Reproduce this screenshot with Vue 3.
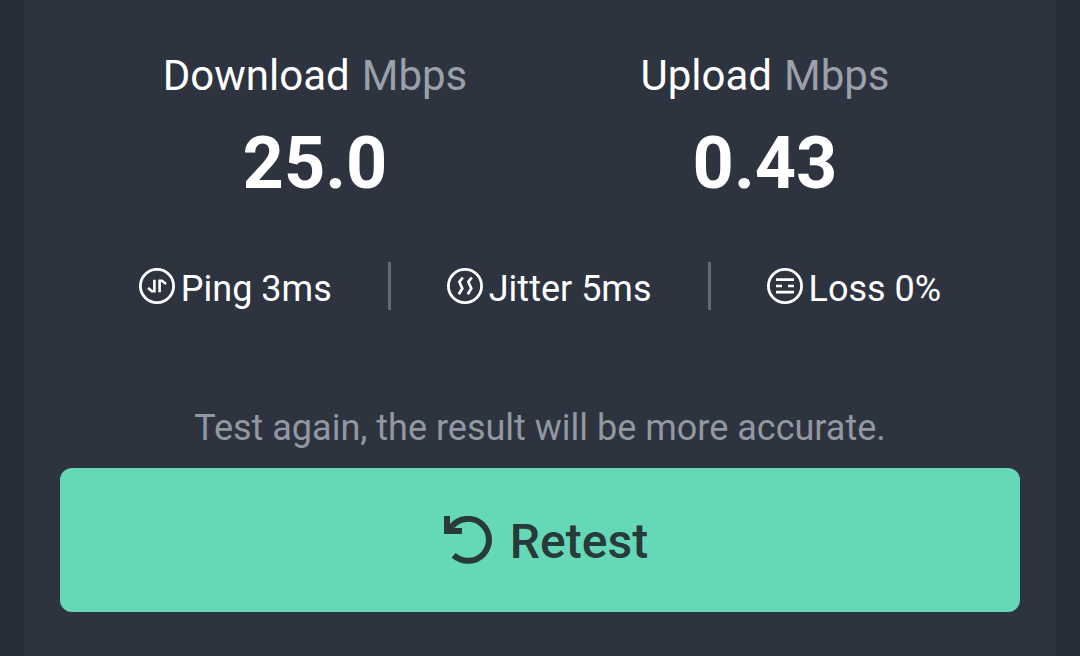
<script setup>
const speeds = [
  { label: 'Download', unit: 'Mbps', value: '25.0' },
  { label: 'Upload', unit: 'Mbps', value: '0.43' },
]
const stats = [
  { id: 'ping', text: 'Ping 3ms' },
  { id: 'jitter', text: 'Jitter 5ms' },
  { id: 'loss', text: 'Loss 0%' },
]
</script>

<template>
  <main class="card">
    <section class="speeds">
      <div v-for="s in speeds" :key="s.label" class="speed">
        <div class="speed-label"><span>{{ s.label }}</span><span class="unit">{{ s.unit }}</span></div>
        <div class="speed-value">{{ s.value }}</div>
      </div>
    </section>

    <section class="stats">
      <template v-for="(s, i) in stats" :key="s.id">
        <span v-if="i > 0" class="divider"></span>
        <div class="stat">
          <svg class="stat-icon" viewBox="0 0 36 36" fill="none" stroke="currentColor" aria-hidden="true">
            <circle cx="18" cy="18" r="16.6" stroke-width="2.8" />
            <path v-if="s.id === 'ping'" stroke-width="2.6" d="M15.4 11.7V23.2H13L9 20M20.6 24.3V12.8H23L27 16" />
            <g v-else-if="s.id === 'jitter'" stroke-width="2.7">
              <path d="M15.8 9.5L12.3 13.8L15.3 20.5L11.8 26.3" stroke-linejoin="round" />
              <path d="M24.8 9.5L21.3 13.8L24.3 20.5L20.8 26.3" stroke-linejoin="round" />
            </g>
            <path v-else stroke-width="2.7" d="M9 11.6H27M9 18H15M21 18H27M9 24.2H27" />
          </svg>
          <span>{{ s.text }}</span>
        </div>
      </template>
    </section>

    <p class="hint">Test again, the result will be more accurate.</p>
    <button class="retest" type="button">
      <svg class="retest-icon" viewBox="0 0 48 48" aria-hidden="true">
        <path d="M8 10.2A21 21 0 1 1 9.7 39.3" fill="none" stroke="currentColor" stroke-width="6" />
        <path d="M0 0H6V8L10 12H18V18H0Z" fill="currentColor" />
      </svg>
      <span class="retest-text">Retest</span>
    </button>
  </main>
</template>

<style>
body {
  margin: 0;
  background: #252d39;
}
</style>

<style scoped>
.card {
  box-sizing: border-box;
  min-height: 100vh;
  margin: 0 24px;
  padding: 51px 36px 44px;
  background: #2d3440;
  color: #fff;
  font-family: Roboto, "Liberation Sans", sans-serif;
}
.speeds {
  display: grid;
  grid-template-columns: 1fr 1fr;
  padding: 0 30px;
}
.speed {
  display: flex;
  flex-direction: column;
  align-items: center;
  gap: 21px;
}
.speed-label {
  display: flex;
  gap: 12px;
  font-size: 42px;
  line-height: 50px;
}
.unit {
  color: #9ba0aa;
}
.speed-value {
  font-size: 72px;
  line-height: 84px;
  font-weight: 700;
}
.stats {
  display: flex;
  justify-content: center;
  align-items: flex-end;
  gap: 56px;
  margin-top: 56px;
}
.divider {
  width: 3px;
  height: 48px;
  background: #626977;
}
.stat {
  display: flex;
  align-items: flex-start;
  gap: 6px;
  font-size: 36px;
  line-height: 42px;
  white-space: nowrap;
}
.stat-icon {
  width: 36px;
  height: 36px;
  flex: none;
}
.hint {
  margin: 97px 0 19px;
  text-align: center;
  font-size: 36px;
  line-height: 42px;
  color: #9298a1;
}
.retest {
  display: flex;
  align-items: center;
  justify-content: center;
  gap: 18px;
  width: 100%;
  height: 144px;
  padding: 0 0 0 12px;
  border: 0;
  border-radius: 12px;
  background: #65d9b7;
  color: #283a3a;
  font-family: inherit;
  font-size: 48px;
  line-height: 56px;
  font-weight: 500;
  cursor: pointer;
}
.retest-text {
  padding-top: 4px;
}
.retest-icon {
  width: 48px;
  height: 48px;
}
</style>
